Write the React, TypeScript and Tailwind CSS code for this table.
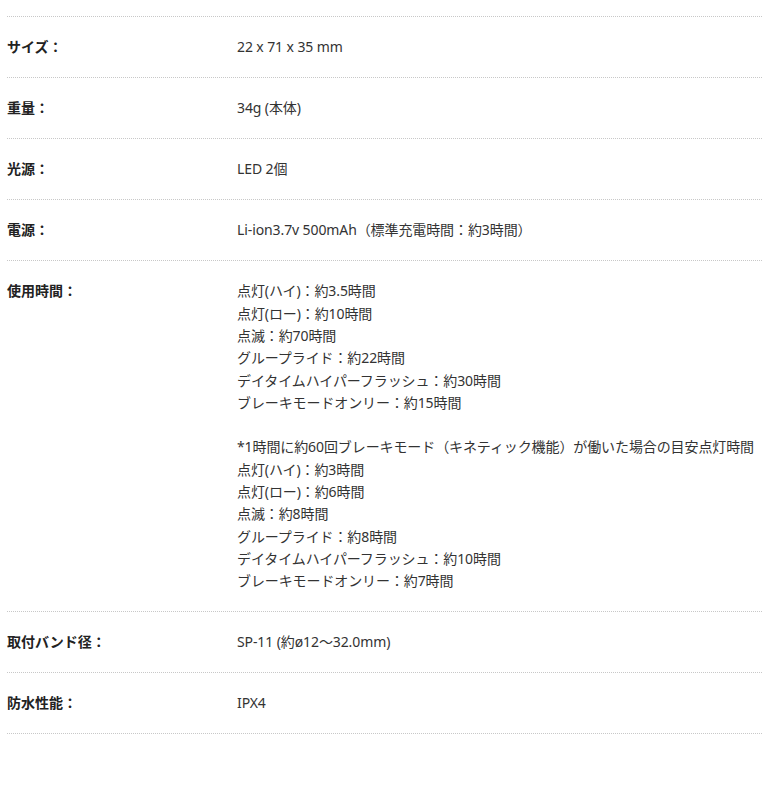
import React from "react";

const rows: { label: string; value: string[] }[] = [
  { label: "サイズ：", value: ["22 x 71 x 35 mm"] },
  { label: "重量：", value: ["34g (本体)"] },
  { label: "光源：", value: ["LED 2個"] },
  { label: "電源：", value: ["Li-ion3.7v 500mAh（標準充電時間：約3時間）"] },
  {
    label: "使用時間：",
    value: [
      "点灯(ハイ)：約3.5時間",
      "点灯(ロー)：約10時間",
      "点滅：約70時間",
      "グループライド：約22時間",
      "デイタイムハイパーフラッシュ：約30時間",
      "ブレーキモードオンリー：約15時間",
      "",
      "*1時間に約60回ブレーキモード（キネティック機能）が働いた場合の目安点灯時間",
      "点灯(ハイ)：約3時間",
      "点灯(ロー)：約6時間",
      "点滅：約8時間",
      "グループライド：約8時間",
      "デイタイムハイパーフラッシュ：約10時間",
      "ブレーキモードオンリー：約7時間",
    ],
  },
  { label: "取付バンド径：", value: ["SP-11 (約ø12〜32.0mm)"] },
  { label: "防水性能：", value: ["IPX4"] },
];

export default function App() {
  return (
    <div
      className="bg-white w-[763px] h-[792px] pt-4 pl-[7px] pr-px text-[14px] leading-[22.3px] text-[#333]"
      style={{ fontFamily: '"Noto Sans", "Noto Sans CJK JP", sans-serif' }}
    >
      <div className="border-t border-dotted border-[#c8c8c8]">
        {rows.map((r) => (
          <div
            key={r.label}
            className="flex border-b border-dotted border-[#c8c8c8] pt-[19.4px] pb-[18.3px]"
          >
            <div className="w-[230px] shrink-0 font-bold text-[#222]">{r.label}</div>
            <div className="flex-1 tracking-[-0.1px]">
              {r.value.map((v, i) => (
                <div key={i} className="whitespace-nowrap h-[22.3px]">
                  {v}
                </div>
              ))}
            </div>
          </div>
        ))}
      </div>
    </div>
  );
}
